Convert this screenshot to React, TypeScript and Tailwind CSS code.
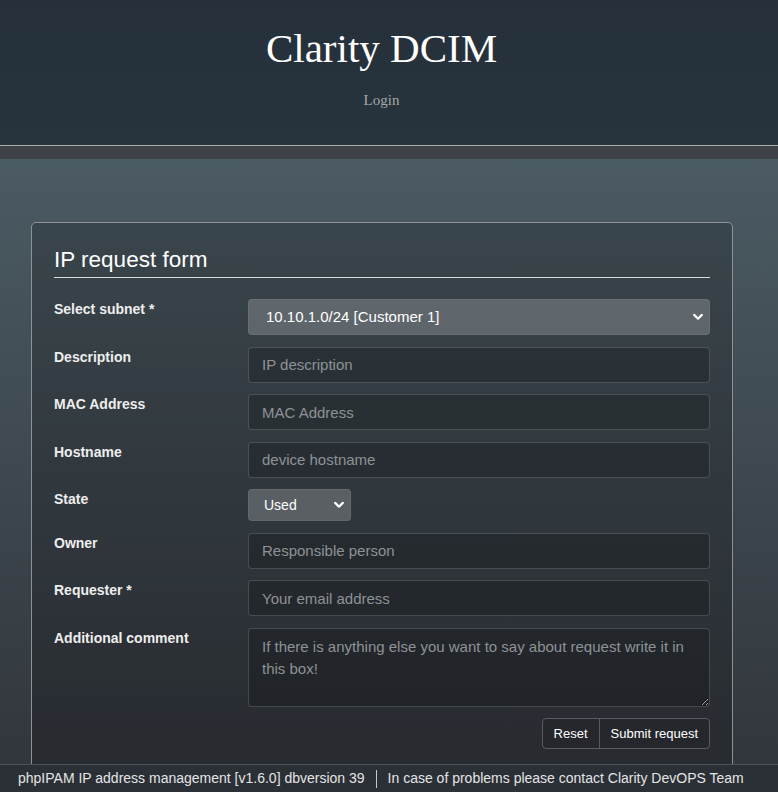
import React from "react";

const sans = { fontFamily: '"Liberation Sans", Arial, sans-serif' };
const serif = { fontFamily: '"Liberation Serif", "Times New Roman", serif' };

function Chevron() {
  return (
    <svg width="10" height="7" viewBox="0 0 10 7" className="pointer-events-none absolute top-1/2 -translate-y-1/2 right-[7px]">
      <path d="M1.2 1.4 L5 5.2 L8.8 1.4" fill="none" stroke="#ffffff" strokeWidth="2.2" strokeLinecap="round" strokeLinejoin="round" />
    </svg>
  );
}

function Row({ label, children }: { label: string; children: React.ReactNode }) {
  return (
    <div className="grid grid-cols-[194px_1fr] items-start">
      <label className="text-[14px] font-bold leading-[20px] text-[#eeeeee]">{label}</label>
      <div>{children}</div>
    </div>
  );
}

function TextInput({ placeholder }: { placeholder: string }) {
  return (
    <input
      type="text"
      placeholder={placeholder}
      className="block w-full h-[36px] rounded-[4px] border border-white/[0.16] bg-black/20 pl-[13px] pr-3 text-[15px] text-[#e6e6e6] placeholder:text-[#8e9296] outline-none"
      style={sans}
    />
  );
}

export default function App() {
  return (
    <div className="min-h-[792px] bg-gradient-to-b from-[#26313a] to-[#2d3036]" style={sans}>
      {/* top banner */}
      <header className="h-[146px] bg-gradient-to-b from-[#25303a] to-[#28343d] border-b border-[#a9adb0] text-center pt-[25px] pr-[15px]">
        <h1 className="text-[41px] leading-[46px] text-white" style={serif}>
          Clarity DCIM
        </h1>
        <div className="mt-[19px] text-[15px] leading-[20px] text-[#a3a6a8]" style={serif}>
          Login
        </div>
      </header>
      <div className="h-[13px] bg-[#3f4348]" />

      {/* page body */}
      <main className="bg-gradient-to-b from-[#4b5b63] via-[#3c454c] to-[#2e3036] pt-[63px] pb-[80px] px-[31px] min-h-[633px]">
        <div className="w-[702px] rounded-[5px] border border-[#8d9296] bg-black/20 px-[22px] pt-[24px] pb-[40px]">
          <h2 className="text-[22.5px] leading-[26px] text-white pb-[4px] border-b border-[#dcdcdc]">IP request form</h2>

          <form className="mt-[21px] flex flex-col gap-[11.5px]">
            <Row label="Select subnet *">
              <div className="relative">
                <select
                  className="block w-full h-[36px] appearance-none rounded-[4px] border border-white/[0.06] bg-white/20 pl-[17px] text-[15px] text-white outline-none"
                  style={sans}
                  defaultValue="1"
                >
                  <option value="1">10.10.1.0/24 [Customer 1]</option>
                </select>
                <Chevron />
              </div>
            </Row>
            <Row label="Description">
              <TextInput placeholder="IP description" />
            </Row>
            <Row label="MAC Address">
              <TextInput placeholder="MAC Address" />
            </Row>
            <Row label="Hostname">
              <TextInput placeholder="device hostname" />
            </Row>
            <Row label="State">
              <div className="relative w-[103px]">
                <select
                  className="block w-full h-[32px] appearance-none rounded-[4px] border border-white/[0.06] bg-white/20 pl-[15px] text-[14px] text-white outline-none"
                  style={sans}
                  defaultValue="used"
                >
                  <option value="used">Used</option>
                </select>
                <Chevron />
              </div>
            </Row>
            <Row label="Owner">
              <TextInput placeholder="Responsible person" />
            </Row>
            <Row label="Requester *">
              <TextInput placeholder="Your email address" />
            </Row>
            <Row label="Additional comment">
              <textarea
                placeholder="If there is anything else you want to say about request write it in this box!"
                className="block w-full h-[79px] rounded-[4px] border border-white/[0.16] bg-black/20 pl-[13px] pr-3 pt-[7px] text-[15px] leading-[22.5px] text-[#e6e6e6] placeholder:text-[#8e9296] outline-none"
                style={sans}
              />
            </Row>
            <div className="flex justify-end">
              <div className="flex h-[31px] rounded-[4px] border border-[#585c62] bg-[#25272c] text-[13px] text-white">
                <button type="button" className="px-[11px] border-r border-[#585c62]" style={sans}>Reset</button>
                <button type="button" className="px-[11px]" style={sans}>Submit request</button>
              </div>
            </div>
          </form>
        </div>
      </main>

      {/* fixed footer bar */}
      <footer className="fixed bottom-0 left-0 right-0 h-[28px] border-t border-[#4c5258] bg-[#2b3036] flex items-center pl-[18px] text-[14px] text-[#e4e4e4]">
        <span>phpIPAM IP address management [v1.6.0] dbversion 39</span>
        <span className="mx-[11px] h-[18px] w-px bg-[#c8c8c8]" />
        <span>In case of problems please contact Clarity DevOPS Team</span>
      </footer>
    </div>
  );
}
